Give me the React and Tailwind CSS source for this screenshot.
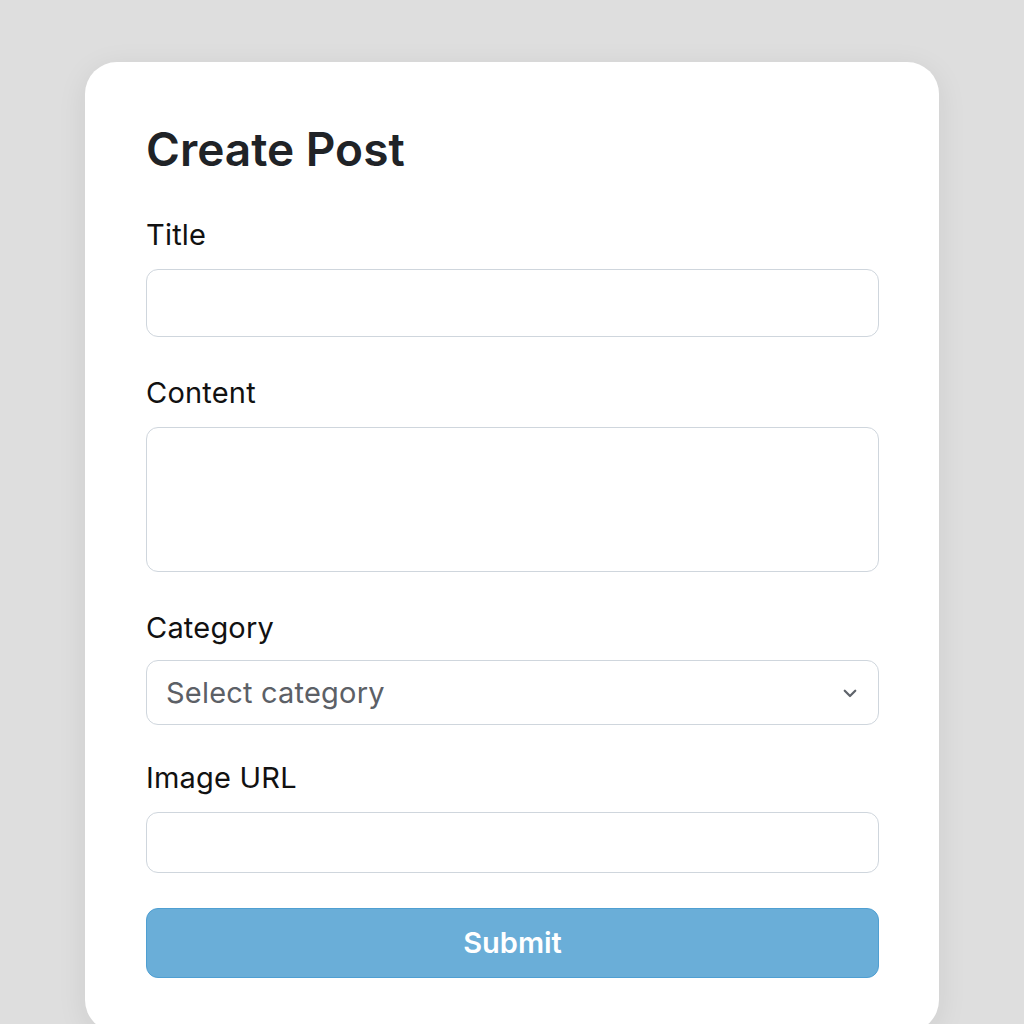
const fieldBox =
  "w-full rounded-[12px] border border-[#cfd6dd] bg-white";

const Label = ({ children, className = "" }) => (
  <label className={`block text-[29px] leading-[34px] tracking-[0.2px] text-[#111111] ${className}`}>
    {children}
  </label>
);

export default function App() {
  return (
    <div
      className="min-h-screen w-full bg-[#dedede] flex justify-center pt-[62px]"
      style={{ fontFamily: "Inter, 'Noto Sans', sans-serif" }}
    >
      <div className="w-[854px] bg-white rounded-[32px] shadow-[0_6px_30px_rgba(0,0,0,0.08)] pl-[61px] pr-[60px] pt-[61px] pb-[54px]">
        {/* heading */}
        <h1 className="text-[46px] leading-[52px] font-semibold text-[#202327]">
          Create Post
        </h1>

        {/* title */}
        <Label className="mt-[43px]">Title</Label>
        <div className={`${fieldBox} h-[68px] mt-[17px]`} />

        {/* content */}
        <Label className="mt-[39px]">Content</Label>
        <div className={`${fieldBox} h-[145px] mt-[17px]`} />

        {/* category */}
        <Label className="mt-[39px]">Category</Label>
        <div className={`${fieldBox} h-[65px] mt-[15px] flex items-center justify-between pl-[19px] pr-[19px]`}>
          <span className="text-[29px] leading-none tracking-[0.2px] text-[#5c6066]">Select category</span>
          <svg width="18" height="18" viewBox="0 0 24 24" fill="none" stroke="#5f646b" strokeWidth="3" strokeLinecap="round" strokeLinejoin="round">
            <polyline points="5,9 12,16 19,9" />
          </svg>
        </div>

        {/* image url */}
        <Label className="mt-[36px]">Image URL</Label>
        <div className={`${fieldBox} h-[61px] mt-[17px]`} />

        {/* submit */}
        <button className="mt-[35px] w-full h-[70px] rounded-[12px] bg-[#6aaed8] border border-[#4f9fd2] text-white text-[29px] font-semibold flex items-center justify-center">
          Submit
        </button>
      </div>
    </div>
  );
}
